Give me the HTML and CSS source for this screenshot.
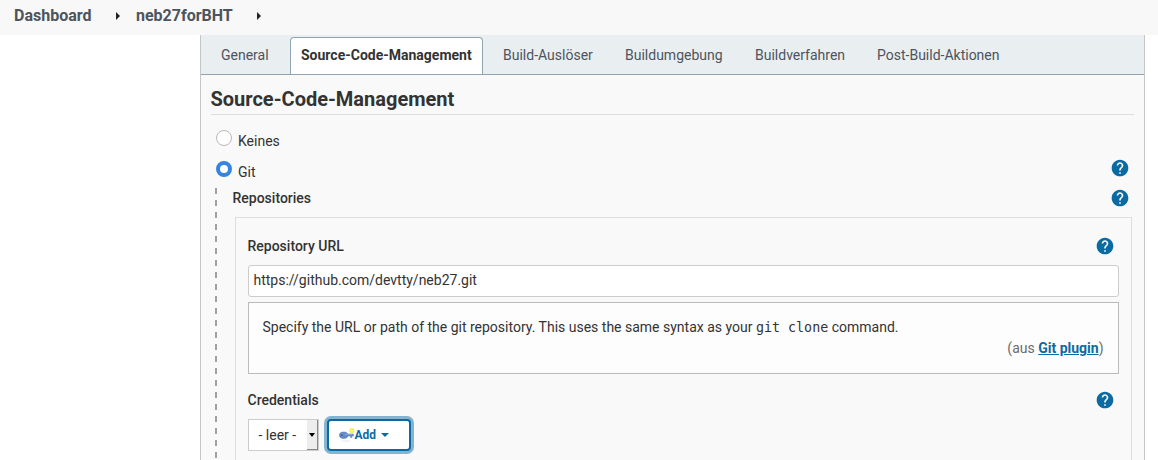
FILE: index.html
```html
<!DOCTYPE html>
<html lang="de">
<head>
<meta charset="utf-8">
<title>neb27forBHT Config</title>
<link rel="stylesheet" href="styles.css">
</head>
<body>
<svg class="defs" aria-hidden="true">
  <symbol id="help" viewBox="0 0 24 24"><path d="M12 2C6.48 2 2 6.48 2 12s4.48 10 10 10 10-4.48 10-10S17.52 2 12 2zm1 17h-2v-2h2v2zm2.07-7.75l-.9.92C13.45 12.9 13 13.5 13 15h-2v-.5c0-1.1.45-2.1 1.17-2.83l1.24-1.26c.37-.36.59-.86.59-1.41 0-1.1-.9-2-2-2s-2 .9-2 2H8c0-2.210 1.790-4 4-4s4 1.790 4 4c0 .88-.36 1.680-.93 2.250z"/></symbol>
</svg>
<header class="breadcrumbs">
  <a class="crumb crumb-home">Dashboard</a><i class="arrow"></i>
  <a class="crumb crumb-job">neb27forBHT</a><i class="arrow"></i>
</header>
<main class="panel">
  <nav class="tabs">
    <a class="tab t-general">General</a>
    <a class="tab t-scm active">Source-Code-Management</a>
    <a class="tab t-trigger">Build-Auslöser</a>
    <a class="tab t-env">Buildumgebung</a>
    <a class="tab t-build">Buildverfahren</a>
    <a class="tab t-post">Post-Build-Aktionen</a>
  </nav>
  <section class="content">
    <h1 class="heading"><span>Source-Code-Management</span></h1>
    <label class="option"><i class="radio"></i><span>Keines</span></label>
    <label class="option option-git"><i class="radio checked"></i><span>Git</span><svg class="help"><use href="#help"/></svg></label>
    <div class="nested">
      <svg class="dashes" width="2" height="280"><path d="M1 0V280" stroke="#a0a0a0" stroke-width="2" stroke-dasharray="6 6"/></svg>
      <div class="nested-body">
        <div class="row repositories"><b class="label">Repositories</b><svg class="help"><use href="#help"/></svg></div>
        <div class="repo">
          <div class="row url"><b class="label">Repository URL</b><svg class="help"><use href="#help"/></svg></div>
          <div class="input"><span>https://github.com/devtty/neb27.git</span></div>
          <div class="hint">
            <p><span class="spec">Specify the URL or path of the git repository. This uses the same syntax as your</span> <code>git clone</code> <span>command.</span></p>
            <p class="from">(aus <a>Git plugin</a>)</p>
          </div>
          <div class="row cred"><b class="label">Credentials</b><svg class="help"><use href="#help"/></svg></div>
          <div class="controls">
            <div class="select"><span>- leer -</span><i class="drop"></i></div>
            <button class="add">
              <svg class="key" width="16" height="16" viewBox="0 0 16 16">
                <ellipse cx="7" cy="14" rx="5.500" ry=".8" fill="#eee"/>
                <path d="M6 7h8.500v2h-1.500v1.500h-1.500V9H7z" fill="#6c8fc2" stroke="#5274a8" stroke-width=".4"/>
                <ellipse cx="4.700" cy="8.200" rx="4.200" ry="3.200" fill="#668cc8" stroke="#4a6da8" stroke-width=".5"/>
                <circle cx="2.800" cy="8.200" r=".9" fill="#3f5f93"/>
                <path d="M6 7.300h7.500" stroke="#a0b8da" stroke-width=".7"/>
                <circle cx="12.800" cy="3.500" r="2.500" fill="#f7ef45"/><circle cx="12.800" cy="3.500" r="1" fill="#fffcb0"/>
              </svg><span>Add</span><i class="caret"></i>
            </button>
          </div>
        </div>
      </div>
    </div>
  </section>
</main>
</body>
</html>
```
FILE: styles.css
```css
* { box-sizing: border-box; }
body { margin: 0; height: 460px; overflow: hidden; background: #fff; color: #333; font: 14px/20px Roboto, sans-serif; white-space: nowrap; }
.defs { display: none; }
.breadcrumbs { height: 35px; padding: 0 14px 3px; background: #f8f8f8; display: flex; align-items: center; color: #4d545d; font-weight: 700; font-size: 16px; }
.crumb-home { width: 102px; }
.crumb-job { margin-left: 16px; width: 121px; }
.arrow { width: 4px; height: 8px; background: #222; clip-path: polygon(0 0, 100% 50%, 0 100%); }
.panel { width: 945px; height: 425px; margin-left: 200px; border: solid #c4c6c8; border-width: 0 1px; background: #f9f9f9; overflow: hidden; }
.tabs { display: flex; gap: 9px; height: 40px; padding: 2px 9px 0; background: #e9eef1; border-bottom: 1px solid #8ea6b1; }
.tab { height: 37px; padding: 7px 10px 0; border: 1px solid transparent; border-bottom: 0; border-radius: 4px 4px 0 0; color: #4d545d; }
.tab.active { background: #fff; border-color: #8ea6b1; color: #333; font-weight: 700; }
.t-general { width: 71px; }
.t-scm { width: 193px; }
.t-trigger { width: 113px; }
.t-env { width: 121px; }
.t-build { width: 113px; }
.content { padding: 0 10px 0 9.5px; }
.heading { margin: 0; height: 40px; padding-top: 12px; font-size: 20px; line-height: 24px; font-weight: 700; border-bottom: 1px solid #dedede; }
.option { display: flex; height: 31px; margin-left: 5.5px; align-items: center; }
.option:first-of-type { margin-top: 9px; }
.option span { margin-left: 6px; padding-top: 2px; }
.option .radio { position: relative; top: -2px; }
.radio { width: 16px; height: 16px; border: 1px solid #bdb7b1; border-radius: 50%; background: #fff; }
.radio.checked { border: 4px solid #3584e4; }
.help { width: 20px; height: 20px; margin-left: auto; fill: #0b6aa2; flex: none; }
.option-git .help { margin-right: 4px; margin-bottom: 5px; }
.nested { display: flex; margin-left: 4.5px; gap: 15.5px; }
.dashes { display: block; flex: none; margin-top: 2px; }
.nested-body { width: 900.5px; flex: none; }
.row { display: flex; align-items: center; height: 20px; }
.label { font-weight: 500; }
.repositories { margin-top: 2px; padding-right: 3px; }
.repo { margin: 9px 1px 0 2.5px; height: 300px; border: 1px solid #dedede; padding: 18px 12px; }
.row.url .label, .row.cred .label { margin-left: -.5px; }
.url .help, .cred .help { margin-right: 4px; }
.input { height: 32px; margin-top: 9px; padding: 4px 5px 5px 4.5px; border: 1px solid #ccc; border-radius: 3px; background: #fff; }
.hint { height: 72px; margin-top: 5px; padding: 14px 14.5px 14px 13.5px; border: 1px solid #bbb; background: #fdfdfd; }
.hint p { margin: 0; line-height: 21px; }
.hint code { font: 13.333px "DejaVu Sans Mono", monospace; }
.from { text-align: right; color: #6c6c6c; }
.from a { color: #0b6aa2; font-weight: 700; text-decoration: underline; }
.cred { margin-top: 16px; }
.controls { display: flex; margin-top: 9px; gap: 8px; }
.select { width: 71px; height: 32px; display: flex; justify-content: space-between; border: 1px solid #ccc; background: #fff; }
.select span { padding: 5px 0 0 9.5px; }
.drop { width: 11px; background: #ededed; border: solid #888; border-width: 0 1px 1px 0; display: flex; align-items: center; justify-content: center; }
.drop::before { content: ""; border: 3.5px solid transparent; border-top: 4px solid #000; border-bottom: 0; }
.add { width: 84px; height: 32px; padding: 0 0 0 10px; display: flex; align-items: center; border: 2px solid #0b6aa2; border-radius: 4px; background: #fff; color: #0b6aa2; font: 700 12px/20px Roboto, sans-serif; box-shadow: 0 0 0 3px #85b4d0; }
.add span { margin-left: -.5px; }
.caret { margin-left: 5px; border: 4px solid transparent; border-top-color: #0b6aa2; border-bottom: 0; }
```
